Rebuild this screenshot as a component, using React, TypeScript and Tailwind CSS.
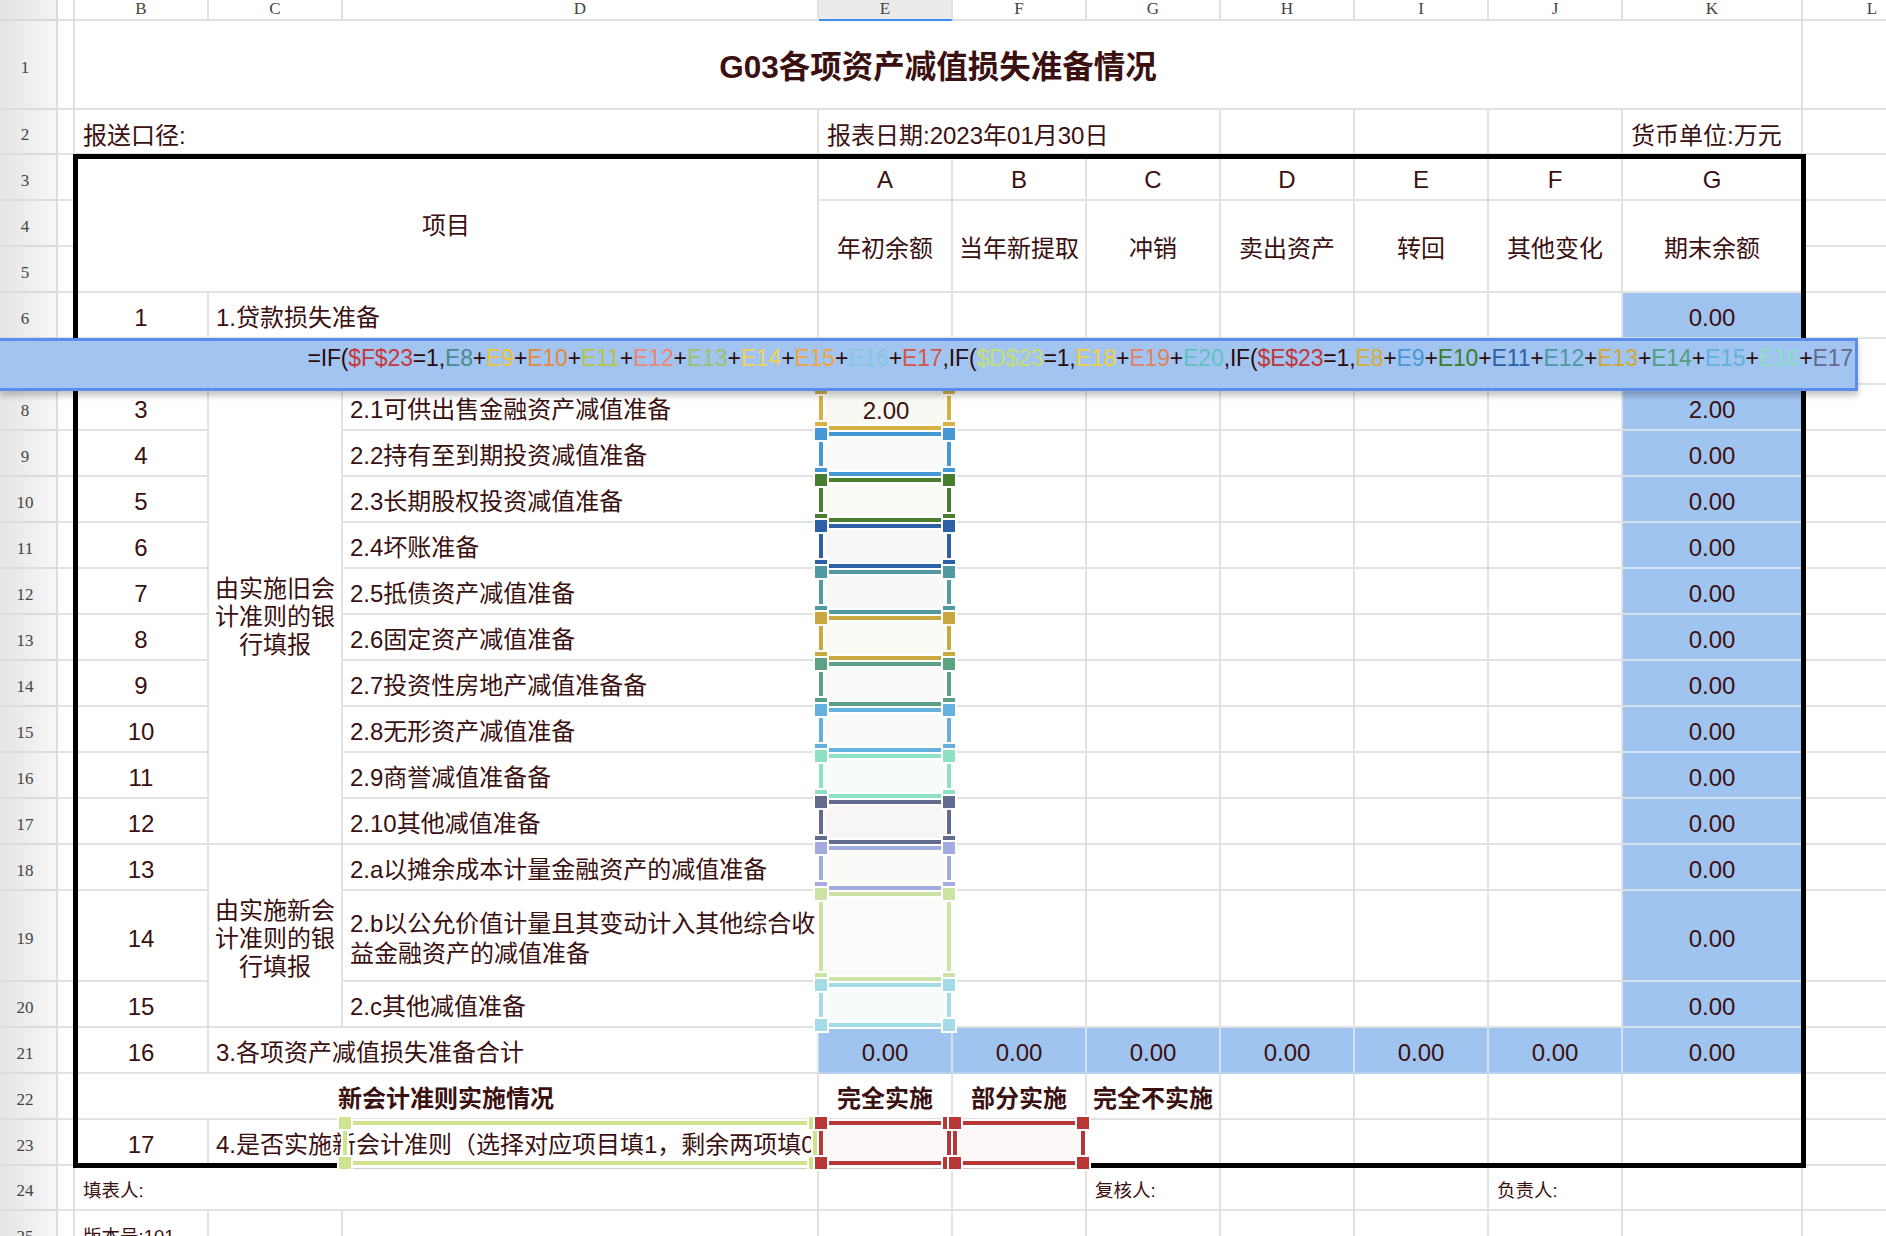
import React from 'react';

const COLS = ['col-start-1', 'col-start-2', 'col-start-3', 'col-start-4', 'col-start-5', 'col-start-6', 'col-start-7', 'col-start-8', 'col-start-9', 'col-start-10', 'col-start-11', 'col-start-12', 'col-start-13'];
const ROWS = ['row-start-1', 'row-start-2', 'row-start-3', 'row-start-4', 'row-start-5', 'row-start-6', 'row-start-7', 'row-start-8', 'row-start-9', 'row-start-10', 'row-start-11', 'row-start-12', 'row-start-13', 'row-start-14', 'row-start-15', 'row-start-16', 'row-start-17', 'row-start-18', 'row-start-19', 'row-start-20', 'row-start-21', 'row-start-22', 'row-start-23', 'row-start-24', 'row-start-25', 'row-start-26'];
const LETTERS = ['', '', 'B', 'C', 'D', 'E', 'F', 'G', 'H', 'I', 'J', 'K', 'L'];

const LINE = 'border-r-2 border-b-2 border-[#e2e2e2]';
const HDR = "font-['Liberation_Serif',serif] text-[17px] leading-[17px] text-[#444]";

// spreadsheet background: every cell with its grid lines
function Base() {
  const out: React.ReactNode[] = [];
  for (let r = 0; r < 26; r++) {
    for (let c = 0; c < 13; c++) {
      const at = `${COLS[c]} ${ROWS[r]}`;
      const k = `${r}-${c}`;
      if (r === 0 && c === 0) {
        out.push(<div key={k} className={`${at} bg-linear-to-r from-[#e3e3e3] to-[#f3f3f3] border-r-2 border-b-2 border-[#dadada]`} />);
      } else if (r === 0 && c === 5) {
        out.push(
          <div key={k} className={`${at} ${HDR} flex items-center justify-center pb-[3px] bg-[#ebebeb] border-r-2 border-r-[#e0e0e0] border-b-2 border-b-[#3b8cf0]`}>
            {LETTERS[c]}
          </div>
        );
      } else if (r === 0) {
        out.push(
          <div key={k} className={`${at} ${HDR} flex items-center justify-center pb-[3px] bg-white border-r-2 border-b-2 border-[#e0e0e0]`}>
            {LETTERS[c]}
          </div>
        );
      } else if (c === 0) {
        out.push(
          <div key={k} className={`${at} ${HDR} flex items-center justify-center pr-[6px] pt-[6px] bg-linear-to-r from-[#e5e5e5] to-[#f7f7f7] border-r-2 border-b-2 border-[#dcdcdc]`}>
            {r}
          </div>
        );
      } else {
        out.push(<div key={k} className={`${at} bg-white ${LINE}`} />);
      }
    }
  }
  return <>{out}</>;
}

// coloured range marker drawn over a referenced cell
function Mark({ c, t, foot = false }: { c: string; t: string; foot?: boolean }) {
  const p = `absolute ${c} ring-2 ring-white`;
  return (
    <>
      {foot && <div className="absolute -left-[6px] -right-[4px] -bottom-[3px] h-[8px] bg-white border-b border-[#cfcfcf]" />}
      <div className={`absolute left-[4px] right-[6px] top-[5px] bottom-[5px] ${t}`} />
      <div className={`${p} left-[10px] right-[12px] top-[1px] h-[4px]`} />
      <div className={`${p} left-[10px] right-[12px] bottom-[1px] h-[4px]`} />
      <div className={`${p} left-0 w-[4px] top-[11px] bottom-[11px]`} />
      <div className={`${p} right-[2px] w-[4px] top-[11px] bottom-[11px]`} />
      <div className={`${p} -left-[4px] -top-[3px] w-[12px] h-[12px]`} />
      <div className={`${p} -right-[2px] -top-[3px] w-[12px] h-[12px]`} />
      <div className={`${p} -left-[4px] -bottom-[3px] w-[12px] h-[12px]`} />
      <div className={`${p} -right-[2px] -bottom-[3px] w-[12px] h-[12px]`} />
    </>
  );
}

const ITEMS = [
  { row: 'row-start-9', n: '3', d: '2.1可供出售金融资产减值准备', k: '2.00' },
  { row: 'row-start-10', n: '4', d: '2.2持有至到期投资减值准备', k: '0.00' },
  { row: 'row-start-11', n: '5', d: '2.3长期股权投资减值准备', k: '0.00' },
  { row: 'row-start-12', n: '6', d: '2.4坏账准备', k: '0.00' },
  { row: 'row-start-13', n: '7', d: '2.5抵债资产减值准备', k: '0.00' },
  { row: 'row-start-14', n: '8', d: '2.6固定资产减值准备', k: '0.00' },
  { row: 'row-start-15', n: '9', d: '2.7投资性房地产减值准备备', k: '0.00' },
  { row: 'row-start-16', n: '10', d: '2.8无形资产减值准备', k: '0.00' },
  { row: 'row-start-17', n: '11', d: '2.9商誉减值准备备', k: '0.00' },
  { row: 'row-start-18', n: '12', d: '2.10其他减值准备', k: '0.00' },
  { row: 'row-start-19', n: '13', d: '2.a以摊余成本计量金融资产的减值准备', k: '0.00' },
  { row: 'row-start-20', n: '14', d: '', k: '0.00' },
  { row: 'row-start-21', n: '15', d: '2.c其他减值准备', k: '0.00' },
];

const MARKS = [
  { row: 'row-start-9', c: 'bg-[#d6b043]', t: 'bg-[#f9f8f3]', v: '2.00' },
  { row: 'row-start-10', c: 'bg-[#4499d5]', t: 'bg-[#f8f9f9]', v: '' },
  { row: 'row-start-11', c: 'bg-[#487f2e]', t: 'bg-[#f9f9f6]', v: '' },
  { row: 'row-start-12', c: 'bg-[#2d61a6]', t: 'bg-[#f7f7f7]', v: '' },
  { row: 'row-start-13', c: 'bg-[#529aa2]', t: 'bg-[#f9f8f8]', v: '' },
  { row: 'row-start-14', c: 'bg-[#c9a93f]', t: 'bg-[#fafaf5]', v: '' },
  { row: 'row-start-15', c: 'bg-[#5aa283]', t: 'bg-[#f9f9f8]', v: '' },
  { row: 'row-start-16', c: 'bg-[#65b1de]', t: 'bg-[#f8faf8]', v: '' },
  { row: 'row-start-17', c: 'bg-[#8ee0c3]', t: 'bg-[#f7fbfb]', v: '' },
  { row: 'row-start-18', c: 'bg-[#626b8e]', t: 'bg-[#f7f5f6]', v: '' },
  { row: 'row-start-19', c: 'bg-[#a4abdf]', t: 'bg-[#fbfaf9]', v: '' },
  { row: 'row-start-20', c: 'bg-[#cde3a6]', t: 'bg-[#fcfbfa]', v: '' },
  { row: 'row-start-21', c: 'bg-[#a4dce6]', t: 'bg-[#f7fbfc]', v: '' },
];

const D = 'text-[#2a0a0a]';
const FORMULA: [string, string][] = [
  ['=IF(', D], ['$F$23', 'text-[#c8383a]'], ['=1,', D],
  ['E8', 'text-[#4b8a8f]'], ['+', D], ['E9', 'text-[#f1c232]'], ['+', D], ['E10', 'text-[#e8883a]'], ['+', D],
  ['E11', 'text-[#b8c247]'], ['+', D], ['E12', 'text-[#ee8572]'], ['+', D], ['E13', 'text-[#9dc06c]'], ['+', D],
  ['E14', 'text-[#f2d25a]'], ['+', D], ['E15', 'text-[#f0a33e]'], ['+', D], ['E16', 'text-[#86c5da]'], ['+', D],
  ['E17', 'text-[#d65645]'], [',IF(', D], ['$D$23', 'text-[#c6dd74]'], ['=1,', D],
  ['E18', 'text-[#f1cf3e]'], ['+', D], ['E19', 'text-[#e7805f]'], ['+', D], ['E20', 'text-[#5ec3bf]'],
  [',IF(', D], ['$E$23', 'text-[#c03636]'], ['=1,', D],
  ['E8', 'text-[#d8ab34]'], ['+', D], ['E9', 'text-[#4997d7]'], ['+', D], ['E10', 'text-[#3f7c2b]'], ['+', D],
  ['E11', 'text-[#2b5fa6]'], ['+', D], ['E12', 'text-[#4e99a1]'], ['+', D], ['E13', 'text-[#d2a737]'], ['+', D],
  ['E14', 'text-[#50a07f]'], ['+', D], ['E15', 'text-[#5fb1df]'], ['+', D], ['E16', 'text-[#8ddfc3]'], ['+', D],
  ['E17', 'text-[#636a8d]'],
];

const CELL = `flex items-center pt-[6px] bg-white ${LINE}`;
const CELL2 = `flex items-center pt-[9px] bg-white ${LINE}`;
const BLUE = 'flex items-center justify-center pt-[6px] bg-[#a0c4f0] border-r-2 border-b-2 border-[#d6e1ee]';

export default function App() {
  return (
    <div className="relative w-[1886px] h-[1236px] overflow-hidden bg-white text-[#3b1010] font-['Liberation_Sans','Noto_Sans_CJK_SC',sans-serif]">
      <div className="grid grid-cols-[58px_17px_134px_134px_476px_134px_134px_134px_134px_134px_134px_180px_140px] grid-rows-[21px_89px_45px_repeat(16,46px)_91px_46px_46px_46px_46px_45px_46px] text-[24px]">
        <Base />

        {/* title */}
        <div className={`col-start-3 col-end-13 row-start-2 justify-center ${CELL} text-[31.5px] font-bold`}>
          G03各项资产减值损失准备情况
        </div>

        {/* report info */}
        <div className={`col-start-3 col-end-6 row-start-3 ${CELL2} pl-[8px]`}>报送口径:</div>
        <div className={`col-start-6 col-end-9 row-start-3 ${CELL2} pl-[8px]`}>报表日期:2023年01月30日</div>
        <div className={`col-start-12 row-start-3 ${CELL2} pl-[8px]`}>货币单位:万元</div>

        {/* table head */}
        <div className={`col-start-3 col-end-6 row-start-4 row-end-7 justify-center ${CELL}`}>项目</div>
        <div className={`col-start-6 row-start-4 justify-center ${CELL}`}>A</div>
        <div className={`col-start-7 row-start-4 justify-center ${CELL}`}>B</div>
        <div className={`col-start-8 row-start-4 justify-center ${CELL}`}>C</div>
        <div className={`col-start-9 row-start-4 justify-center ${CELL}`}>D</div>
        <div className={`col-start-10 row-start-4 justify-center ${CELL}`}>E</div>
        <div className={`col-start-11 row-start-4 justify-center ${CELL}`}>F</div>
        <div className={`col-start-12 row-start-4 justify-center ${CELL}`}>G</div>
        <div className={`col-start-6 row-start-5 row-end-7 justify-center ${CELL}`}>年初余额</div>
        <div className={`col-start-7 row-start-5 row-end-7 justify-center ${CELL}`}>当年新提取</div>
        <div className={`col-start-8 row-start-5 row-end-7 justify-center ${CELL}`}>冲销</div>
        <div className={`col-start-9 row-start-5 row-end-7 justify-center ${CELL}`}>卖出资产</div>
        <div className={`col-start-10 row-start-5 row-end-7 justify-center ${CELL}`}>转回</div>
        <div className={`col-start-11 row-start-5 row-end-7 justify-center ${CELL}`}>其他变化</div>
        <div className={`col-start-12 row-start-5 row-end-7 justify-center ${CELL}`}>期末余额</div>

        {/* row 6; row 7 lies under the formula editor */}
        <div className={`col-start-3 row-start-7 justify-center ${CELL}`}>1</div>
        <div className={`col-start-4 col-end-6 row-start-7 ${CELL} pl-[7px]`}>1.贷款损失准备</div>
        <div className={`col-start-12 row-start-7 ${BLUE}`}>0.00</div>
        <div className={`col-start-4 col-end-6 row-start-8 ${CELL}`} />
        <div className={`col-start-12 row-start-8 ${BLUE}`} />

        {/* group labels */}
        <div className={`col-start-4 row-start-9 row-end-19 justify-center text-center leading-[28px] ${CELL} px-[6px]`}>
          由实施旧会计准则的银行填报
        </div>
        <div className={`col-start-4 row-start-19 row-end-22 justify-center text-center leading-[28px] ${CELL} px-[6px]`}>
          由实施新会计准则的银行填报
        </div>

        {/* detail rows */}
        {ITEMS.map((it) => (
          <React.Fragment key={it.n}>
            <div className={`col-start-3 ${it.row} justify-center ${CELL}`}>{it.n}</div>
            <div className={`col-start-5 ${it.row} ${CELL} pl-[7px] leading-[30px]`}>
              {it.d || (
                <span>
                  2.b以公允价值计量且其变动计入其他综合收
                  <br />
                  益金融资产的减值准备
                </span>
              )}
            </div>
            <div className={`col-start-12 ${it.row} ${BLUE}`}>{it.k}</div>
          </React.Fragment>
        ))}

        {/* totals */}
        <div className={`col-start-3 row-start-22 justify-center ${CELL}`}>16</div>
        <div className={`col-start-4 col-end-6 row-start-22 ${CELL} pl-[7px]`}>3.各项资产减值损失准备合计</div>
        <div className={`col-start-6 row-start-22 ${BLUE} border-b-[#b9d1f1]`}>0.00</div>
        <div className={`col-start-7 row-start-22 ${BLUE} border-b-[#b9d1f1]`}>0.00</div>
        <div className={`col-start-8 row-start-22 ${BLUE} border-b-[#b9d1f1]`}>0.00</div>
        <div className={`col-start-9 row-start-22 ${BLUE} border-b-[#b9d1f1]`}>0.00</div>
        <div className={`col-start-10 row-start-22 ${BLUE} border-b-[#b9d1f1]`}>0.00</div>
        <div className={`col-start-11 row-start-22 ${BLUE} border-b-[#b9d1f1]`}>0.00</div>
        <div className={`col-start-12 row-start-22 ${BLUE} border-b-[#b9d1f1]`}>0.00</div>

        {/* implementation */}
        <div className={`col-start-3 col-end-6 row-start-23 justify-center font-bold ${CELL}`}>新会计准则实施情况</div>
        <div className={`col-start-6 row-start-23 justify-center font-bold ${CELL}`}>完全实施</div>
        <div className={`col-start-7 row-start-23 justify-center font-bold ${CELL}`}>部分实施</div>
        <div className={`col-start-8 row-start-23 justify-center font-bold ${CELL}`}>完全不实施</div>
        <div className={`col-start-3 row-start-24 justify-center ${CELL}`}>17</div>
        <div className={`col-start-4 col-end-6 row-start-24 ${CELL} pl-[7px] overflow-hidden whitespace-nowrap`}>
          4.是否实施新会计准则（选择对应项目填1，剩余两项填0）
        </div>

        {/* signatures */}
        <div className={`col-start-3 col-end-6 row-start-25 ${CELL} pl-[8px] text-[18.5px]`}>填表人:</div>
        <div className={`col-start-8 row-start-25 ${CELL} pl-[8px] text-[18.5px]`}>复核人:</div>
        <div className={`col-start-11 row-start-25 ${CELL} pl-[8px] text-[18.5px]`}>负责人:</div>
        <div className={`col-start-3 row-start-26 flex items-start pt-[12px] pl-[8px] bg-white ${LINE} text-[18.5px]`}>版本号:101</div>

        {/* referenced cells E8:E20 */}
        {MARKS.map((m) => (
          <div key={m.row} className={`col-start-6 ${m.row} relative flex items-center justify-center pt-[6px]`}>
            <Mark c={m.c} t={m.t} />
            {m.v && <span className="relative">{m.v}</span>}
          </div>
        ))}

        {/* report frame */}
        <div className="col-start-3 col-end-13 row-start-4 row-end-25 -ml-[2px] -mt-[1px] -mr-[3px] -mb-[2px] border-[5px] border-black pointer-events-none" />

        {/* referenced cells D23, E23, F23 */}
        <div className="col-start-5 row-start-24 relative pointer-events-none">
          <Mark c="bg-[#cfe38e]" t="bg-transparent" foot />
        </div>
        <div className="col-start-6 row-start-24 relative">
          <Mark c="bg-[#b73636]" t="bg-[#fcf8f8]" foot />
        </div>
        <div className="col-start-7 row-start-24 relative">
          <Mark c="bg-[#b73636]" t="bg-[#fcf8f8]" foot />
        </div>
      </div>

      {/* formula editor floating over row 7 */}
      <div className="absolute left-0 top-[338px] z-30 flex h-[53px] w-[1858px] items-start justify-end overflow-hidden border-y-[3px] border-r-[3px] border-[#5b8def] bg-[#a1c5f0] shadow-[0_5px_6px_rgba(0,0,0,0.22)]">
        <span className="whitespace-nowrap pr-[2px] pt-[4px] text-[23px] leading-[26px] tracking-[-0.15px]">
          {FORMULA.map(([s, c], i) => (
            <span key={i} className={c}>
              {s}
            </span>
          ))}
        </span>
      </div>
    </div>
  );
}
